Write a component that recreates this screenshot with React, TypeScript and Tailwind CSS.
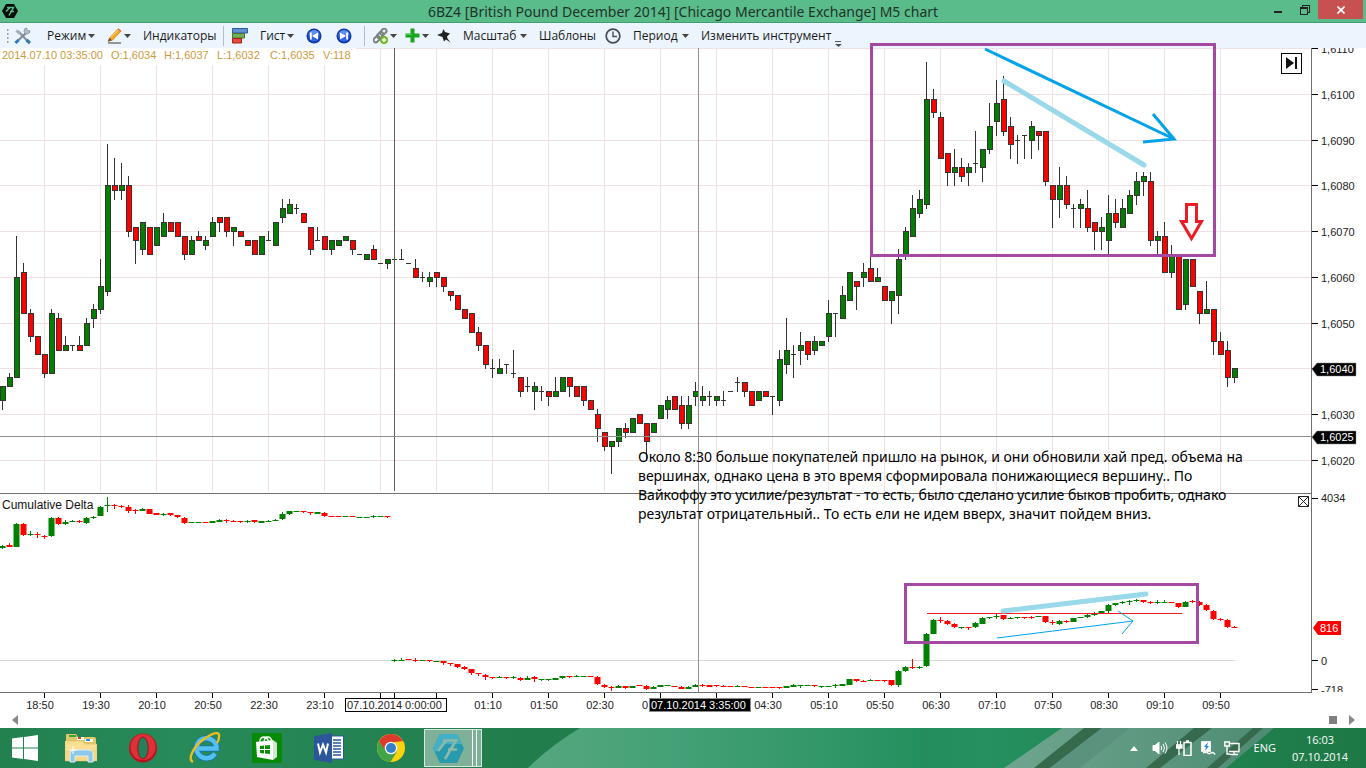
import React from "react";

type Candle = [number, string, number, number, number, number];

// direction (g up, r down, d doji), high, body top, body bottom, low; in ticks above 1.6000
const PRICE = `g36,36,33,31 g39,38,36,36 g69,60,38,38 r63,61,52,52 r53,52,47,46 r47,47,43,43 r43,43,39,38 g53,52,39,39 r52,51,44,44 g47,45,44,44
d45,45,45,44 r47,45,44,44 g51,50,45,45 g54,53,51,49 g64,58,53,52 g89,80,57,56 r86,80,79,77 g85,80,79,77 r82,80,70,69 r71,71,68,63
g72,72,66,65 r71,71,65,65 g71,71,67,67 g74,72,69,69 r72,72,70,70 r72,72,69,69 r69,69,65,64 g69,68,65,65 r70,69,68,68 g69,68,67,66
g73,72,69,69 r73,73,72,70 r73,73,70,69 g71,71,70,67 r70,70,69,69 r68,68,67,67 r68,68,65,65 g69,69,65,65 d70,68,68,68 g72,72,67,67
g77,75,73,72 g77,76,74,74 d76,75,75,74 r74,74,72,72 r71,71,66,65 d71,68,68,68 r69,69,66,66 g68,68,66,65 g68,68,67,67 g69,69,68,68
r68,68,66,65 d65,65,65,65 g65,65,64,64 r67,66,64,64 d63,63,63,63 g64,64,63,62 d65,64,64,62 d66,64,64,64 d63,63,63,63 r64,62,60,60
d61,60,60,59 g61,60,59,58 r61,61,60,58 r60,60,58,57 r57,57,56,55 r56,56,53,53 r53,53,51,51 r52,52,48,48 r49,48,45,44 r45,45,41,40
d42,40,40,38 g42,40,39,39 d41,41,41,39 d44,39,39,38 r38,38,35,34 d38,36,36,35 g37,36,35,31 d36,35,35,33 r35,35,34,32 g38,35,34,34
g38,38,35,35 r38,38,36,34 r36,36,34,34 r36,36,33,32 r33,33,31,31 r31,30,27,24 r26,26,23,22 g24,24,23,17 g27,27,24,23 r28,27,26,25
g29,29,26,26 r30,30,28,28 r28,28,24,20 g28,28,26,26 g32,32,29,29 g34,33,31,29 r34,34,31,31 r34,32,28,27 g34,32,28,27 g37,35,34,32
g36,34,33,32 d35,34,34,32 g34,34,33,32 d35,33,33,32 d35,35,35,35 d38,37,37,35 r37,37,35,34 r35,35,32,32 g35,35,33,33 r35,35,34,34
d34,34,34,30 g44,42,33,32 g51,44,41,39 d45,43,43,38 g48,45,44,41 r46,46,43,42 g47,46,44,43 g46,46,45,45 g55,52,47,46 d52,52,52,47
g58,56,51,51 g61,61,55,55 r59,59,58,53 g63,61,60,58 r65,62,59,59 g62,60,59,59 r58,58,55,55 g57,57,55,50 g66,64,56,52 g71,70,65,64
g78,75,69,69 g79,77,74,73 g107,99,76,75 r101,99,96,95 r96,95,86,86 r87,87,83,80 g88,84,83,80 r86,84,82,81 g85,84,83,80 d92,85,85,83
g88,88,84,81 g98,93,88,87 g103,98,94,91 r104,99,92,91 r95,93,89,86 d91,90,90,85 d91,91,91,86 g94,93,90,86 r92,92,91,88 r92,92,81,80
r80,80,77,71 g84,80,77,73 r82,80,76,75 d76,75,75,71 g77,76,75,71 r79,75,71,70 r72,72,70,66 g73,71,70,66 g78,74,68,65 r77,74,72,71
g77,75,71,71 g79,78,74,74 g83,81,78,76 g83,82,81,78 r83,81,68,67 g70,69,68,65 r72,69,61,61 g67,65,61,60 r65,65,53,53 g64,64,54,53
r64,64,58,58 r57,57,52,50 g59,53,52,52 r53,53,46,43 r48,46,43,43 r46,44,38,36 g40,40,38,37`;

// direction, high, body top, body bottom, low; in chart coordinates
const DELTA = `g545,546,548,549 r543,545,547,547 g523,524,547,547 r523,524,535,536 g531,534,535,536 r532,534,535,538 r535,536,537,539 g517,518,536,537 r517,518,524,525 g520,522,524,525
g520,521,522,522 r520,521,522,523 g517,518,523,524 g516,517,518,519 g506,507,516,516 g497,505,506,512 r504,505,506,509 r505,506,507,508 r505,507,511,513 r509,510,511,514
g508,509,511,511 r509,509,514,514 r513,513,515,515 g513,514,515,516 r513,513,515,516 r515,515,517,518 r517,518,523,524 g522,522,523,523 g522,522,523,523 r522,522,523,523
g521,521,523,523 g519,520,522,522 r519,520,521,523 r520,521,522,522 r521,521,522,523 g520,521,522,523 r520,520,522,523 g521,521,523,523 g520,521,522,522 g519,520,521,521
g512,514,519,520 g511,511,514,515 g511,511,512,512 r511,511,512,513 r512,512,513,515 g512,512,514,514 r512,513,516,517 r516,516,517,517 r516,516,517,517 g516,516,517,517
r516,516,517,517 g517,517,518,518 g517,517,518,518 g515,516,517,518 g516,516,517,517 r516,516,517,518 g659,660,661,662 g658,660,661,661 r659,659,660,660 r658,660,661,662
g660,660,661,661 r660,660,661,662 g661,661,662,662 r661,661,663,665 r663,663,664,666 r664,664,667,668 r666,667,669,670 r669,669,673,675 r673,673,674,676 r674,675,677,680
r677,677,678,679 g676,677,678,678 r677,677,678,679 g676,677,678,679 r677,678,680,681 g676,678,680,680 r676,677,679,682 g679,679,680,681 g679,679,680,681 g678,678,680,680
g676,676,678,679 r676,676,677,678 g675,676,677,677 g676,676,677,677 r676,676,677,677 r676,677,684,685 r684,685,687,688 r686,687,688,691 g685,686,688,688 r686,686,688,689
g686,686,688,688 r685,685,686,686 r685,686,689,690 g686,687,689,689 g685,685,687,687 g685,685,686,686 r686,686,687,687 r686,687,689,689 g686,687,689,689 g684,685,687,687
r684,685,686,687 r685,685,687,687 r685,685,686,687 r685,686,687,687 r686,686,687,687 g685,686,687,687 r686,686,687,687 r687,687,688,688 g687,687,688,688 r687,687,688,688
r687,687,688,688 r687,687,688,689 g686,686,688,688 g684,685,687,687 g685,685,686,688 g685,685,686,686 r685,685,686,687 g686,686,687,688 g686,686,687,687 g684,685,686,688
g684,684,686,686 g679,679,685,685 r679,679,681,682 r680,681,682,682 g679,680,681,681 r680,680,681,681 r680,680,681,682 r680,680,685,686 g670,671,685,687 g666,667,671,672
r659,667,668,669 g666,667,668,669 g633,634,666,667 g619,620,634,634 r617,620,621,623 r620,621,624,625 r623,624,627,628 g627,627,628,629 r627,627,628,630 g622,623,627,628
g617,618,624,624 g617,617,618,619 g614,616,617,619 r615,615,619,620 g617,618,619,619 g617,617,618,619 r617,617,618,619 r616,617,618,619 g616,616,617,617 r616,616,622,623
r620,622,623,625 g620,621,624,625 r620,621,622,623 g618,618,622,622 g617,617,618,618 g614,615,617,618 g612,613,615,616 g611,611,613,613 g604,605,611,614 g603,603,605,606
g601,602,603,604 g600,601,602,605 g599,600,601,602 r600,600,602,603 r601,602,603,604 g600,602,603,604 g600,602,603,603 r602,602,603,603 r603,603,607,608 g601,602,607,607
r600,601,602,603 r601,602,605,606 r604,605,610,611 r610,611,619,620 r618,619,620,621 r619,620,627,628 r626,627,628,628`;

function parse(data: string): Candle[] {
  return data
    .trim()
    .split(/\s+/)
    .map((t, i) => {
      const [h, top, bottom, l] = t.slice(1).split(",").map(Number);
      return [2 + 7 * i, t[0], h, top, bottom, l];
    });
}

const priceY = (t: number) => Math.round(94 + (100 - t) * 4.57);
const priceCandles = parse(PRICE);
const deltaCandles = parse(DELTA);
const columns = Array.from({ length: 22 }, (_, k) => 44 + 56 * k);
const priceLabels = [110, 100, 90, 80, 70, 60, 50, 40, 30, 20];
const timeLabels: [number, string][] = [
  "18:50", "19:30", "20:10", "20:50", "22:30", "23:10", "", "", "01:10", "01:50", "02:30",
  "", "", "04:30", "05:10", "05:50", "06:30", "07:10", "07:50", "08:30", "09:10", "09:50",
].map((t, k) => [40 + 56 * k, t]);

const note = [
  "Около 8:30 больше покупателей пришло на рынок, и они обновили хай пред. объема на",
  "вершинах, однако цена в это время сформировала понижающиеся вершину.. По",
  "Вайкоффу это усилие/результат - то есть, было сделано усилие быков пробить, однако",
  "результат отрицательный.. То есть ели не идем вверх, значит пойдем вниз.",
];

const axisFont = "font-['Liberation_Sans',sans-serif] text-[11px]";

function Chart() {
  return (
    <svg viewBox="0 48 1366 664" className="block h-auto w-full overflow-visible" role="img" aria-label="6BZ4 M5 chart">
      <rect x="0" y="48" width="1366" height="664" fill="#fff" />
      <g shapeRendering="crispEdges" fill="#f0e0e4">
        {columns.map((x) => (
          <rect key={x} x={x} y={x < 350 ? 65 : 48} width="1" height={x < 350 ? 426 : 443} />
        ))}
        {priceLabels.map((t) => (
          <rect key={t} x={t === 110 ? 356 : 0} y={priceY(t)} width={t === 110 ? 955 : 1311} height="1" />
        ))}
      </g>
      <g shapeRendering="crispEdges">
        {priceCandles.map(([x, d, h, top, bottom, l]) => {
          const y1 = priceY(top);
          const y2 = priceY(bottom);
          return (
            <g key={x}>
              <rect x={x} y={priceY(h)} width="1" height={priceY(l) - priceY(h) + 1} fill="#333" />
              {d === "d" ? (
                <rect x={x - 2} y={y1} width="5" height="1" fill="#333" />
              ) : (
                <>
                  <rect x={x - 2} y={y1} width="6" height={y2 - y1 + 1} fill="#3a3232" />
                  <rect x={x - 1} y={y1 + 1} width="4" height={y2 - y1 - 1} fill={d === "g" ? "#008000" : "#ff0000"} />
                </>
              )}
            </g>
          );
        })}
        <rect x="0" y="660" width="1235" height="1" fill="#d8d8d8" />
        {deltaCandles.map(([x, d, h, top, bottom, l]) => (
          <g key={x} fill={d === "g" ? "#008000" : "#ff0000"}>
            <rect x={x} y={h} width="1" height={l - h} />
            <rect x={x - 3} y={top} width="7" height={bottom - top} opacity="0.5" />
            <rect x={x - 2} y={top} width="5" height={bottom - top} />
          </g>
        ))}
        <rect x="394" y="48" width="1" height="443" fill="#606060" />
        <rect x="698" y="48" width="1" height="644" fill="#909090" />
        <rect x="0" y="436" width="1311" height="1" fill="#909090" />
        <rect x="0" y="493" width="1311" height="1" fill="#707070" />
        <rect x="1311" y="48" width="1" height="645" fill="#707070" />
        <rect x="0" y="692" width="1312" height="1" fill="#707070" />
        {[...columns, 394].map((x) => (
          <rect key={x} x={x} y="693" width="1" height="5" fill="#000" />
        ))}
        {[...priceLabels.map(priceY), 498, 660, 689].map((y) => (
          <rect key={y} x="1312" y={y} width="6" height="1" fill="#000" />
        ))}
      </g>

      <clipPath id="plot">
        <rect x="0" y="48" width="1366" height="644" />
      </clipPath>
      <g className={axisFont} clipPath="url(#plot)" fill="#222">
        {priceLabels
          .filter((t) => t !== 40)
          .map((t) => (
            <text key={t} x="1321" y={priceY(t) + 5}>
              {`1,6${String(t).padStart(3, "0")}`}
            </text>
          ))}
        <text x="1321" y="502">4034</text>
        <text x="1321" y="665">0</text>
        <text x="1321" y="694">-718</text>
      </g>
      <g className={axisFont} fill="#222" textAnchor="middle">
        {timeLabels.map(([x, t]) => (
          <text key={x} x={x} y="709">{t}</text>
        ))}
        <text x="645" y="709">0</text>
      </g>
      <g className={axisFont} fill="#cc9a3c">
        <text x="2" y="59">2014.07.10 03:35:00</text>
        <text x="111" y="59">O:1,6034</text>
        <text x="164" y="59">H:1,6037</text>
        <text x="217" y="59">L:1,6032</text>
        <text x="270" y="59">C:1,6035</text>
        <text x="323" y="59">V:118</text>
      </g>
      <text x="2" y="509" className="font-['Liberation_Sans',sans-serif] text-[12px]" fill="#111">Cumulative Delta</text>

      <g className={axisFont}>
        <path d="M1312 369l5-6h39v13h-39z" fill="#000" stroke="#888" strokeWidth="0.5" />
        <text x="1320" y="373" fill="#fff">1,6040</text>
        <path d="M1312 437l5-6h39v13h-39z" fill="#000" stroke="#888" strokeWidth="0.5" />
        <text x="1320" y="441" fill="#fff">1,6025</text>
        <path d="M1313 628l5-7h23v14h-23z" fill="#f00" />
        <text x="1320" y="632" fill="#fff">816</text>
        <rect x="345.5" y="698.5" width="101" height="13" fill="#fff" stroke="#000" />
        <text x="347" y="709" fill="#222">07.10.2014 0:00:00</text>
        <rect x="649.5" y="698.5" width="101" height="13" fill="#000" stroke="#888" />
        <text x="651" y="709" fill="#fff">07.10.2014 3:35:00</text>
      </g>

      <rect x="1281.5" y="53.5" width="20" height="20" fill="#fff" stroke="#000" />
      <path d="M1286 57v12l8-6zM1295 57h2v12h-2z" fill="#111" />
      <path d="M1298.500 496.500h10v10h-10zM1298.500 496.500l10 10M1308.500 496.500l-10 10" fill="#fff" stroke="#222" />

      <g fill="none">
        <g stroke="#a349a4" strokeWidth="3">
          <rect x="871.5" y="44.5" width="343" height="211" />
          <rect x="905.5" y="584.5" width="292" height="58" />
        </g>
        <path d="M927 613.5H1182" stroke="#ed1c24" strokeWidth="1" />
        <g stroke="#99d9ea" strokeWidth="5" strokeLinecap="round">
          <path d="M1004 81L1144 165" />
          <path d="M1003 611L1146 594" />
        </g>
        <path d="M985 49L1174 139M1153 114L1174 139L1143 142" stroke="#00a2e8" strokeWidth="3" />
        <path d="M997 638L1133 621M1118 611L1133 621L1122 634" stroke="#00a2e8" strokeWidth="1" />
        <path d="M1186.500 204.500h10v17h5l-10 17-10-17h5z" stroke="#ed1c24" strokeWidth="3" />
      </g>
      <g className="font-['Noto_Sans',sans-serif] text-[14px]" fill="#000">
        {note.map((line, i) => (
          <text key={line} x="638" y={462 + 19 * i}>{line}</text>
        ))}
      </g>
    </svg>
  );
}

const Caret = () => (
  <svg viewBox="0 0 7 4" className="h-1 w-[7px] shrink-0" aria-hidden="true">
    <path d="M0 0h7L3.500 4z" fill="#444" />
  </svg>
);

function Tool({ w, label, caret, children }: { w: string; label?: string; caret?: boolean; children: React.ReactNode }) {
  return (
    <button type="button" aria-label={label} className={`flex h-6 shrink-0 items-center justify-between whitespace-nowrap ${w}`}>
      {children}
      {caret && <Caret />}
    </button>
  );
}

const Separator = () => <span className="-mr-1 h-5 w-px shrink-0 bg-[#b4bcc6]" />;

function Seek({ flip }: { flip?: boolean }) {
  return (
    <svg viewBox="0 0 16 16" className={flip ? "size-4 -scale-x-100" : "size-4"} aria-hidden="true">
      <circle cx="8" cy="8" r="7.500" fill="#1238a8" />
      <circle cx="8" cy="8" r="5.800" fill="#2f66dc" />
      <path d="M2.500 7a5.500 5 0 0 1 11 0q-5.500 2-11 0z" fill="#7fa8f4" opacity=".6" />
      <path d="M4 4.500h1.800v7H4zM12 4.500v7L6 8z" fill="#fff" />
    </svg>
  );
}

function Toolbar() {
  return (
    <div role="toolbar" aria-label="Инструменты" className="flex h-[25px] items-center gap-3 overflow-hidden bg-[#ecf4fd] pl-[15px] font-['Open_Sans',sans-serif] text-[12px] text-[#1a1a1a]">
      <Tool w="relative w-5" label="Настройки">
        <svg viewBox="0 0 28 18" className="absolute -left-[9px] h-[18px] w-7" aria-hidden="true">
          <path d="M1 3h1.500M1 7h1.500M1 11h1.500M1 15h1.500" stroke="#888" strokeWidth="1.500" />
          <path d="M12 4l9.500 10" stroke="#8494a4" strokeWidth="2.200" />
          <path d="M9.500 4.500L11 2.500l3.500 3-2 2z" fill="#a4b0bc" />
          <path d="M20.500 13l3.500 3" stroke="#3674b4" strokeWidth="3" />
          <path d="M20 6L12 13.500" stroke="#7b8b9a" strokeWidth="2.200" />
          <path d="M12.500 13L9.500 16" stroke="#2c78c4" strokeWidth="3" />
          <path d="M24 3.500a3 3 0 1 1-3-2.500v2l1 1z" fill="#b4bec8" stroke="#7b8b9a" strokeWidth=".7" />
        </svg>
      </Tool>
      <Tool w="w-12" caret>Режим</Tool>
      <Tool w="w-6" label="Рисование" caret>
        <svg viewBox="0 0 15 16" className="h-4 w-[15px]" aria-hidden="true">
          <path d="M11 .8l3 2.400-8.500 9L1 13.500l1.800-4z" fill="#f7a823" stroke="#c87812" strokeWidth=".6" />
          <path d="M4 9l8-7.600" stroke="#ffe08a" strokeWidth="1" />
          <path d="M1 13.500l1.500-3.500 2.500 2.200z" fill="#555" />
          <path d="M10.500 1.500l1-1 3 2.300-1 1z" fill="#e86a50" />
          <path d="M1 15h13" stroke="#777" strokeWidth="1.500" />
        </svg>
      </Tool>
      <Tool w="w-[68px]">Индикаторы</Tool>
      <Separator />
      <Tool w="w-4" label="Гистограмма">
        <svg viewBox="0 0 16 16" className="size-4" aria-hidden="true">
          <path d="M.5.5h15v4.500H.5z" fill="#6491d6" stroke="#2d5ba6" />
          <path d="M.5 5.500h12V10H.5z" fill="#78ad58" stroke="#3c7a28" />
          <path d="M.5 10.500h9V15H.5z" fill="#e54c3c" stroke="#a02218" />
        </svg>
      </Tool>
      <Tool w="w-[34px]" caret>Гист</Tool>
      <Tool w="w-4" label="Назад"><Seek /></Tool>
      <Tool w="ml-0.5 w-4" label="Вперёд"><Seek flip /></Tool>
      <Separator />
      <Tool w="w-[24px]" label="Связь" caret>
        <svg viewBox="0 0 15 16" className="h-4 w-[15px]" aria-hidden="true">
          <g fill="none" stroke="#7c8480" strokeWidth="2">
            <rect x="7" y="1.500" width="7" height="4.500" rx="2.200" transform="rotate(-45 10.500 4)" />
            <rect x="3.500" y="5" width="7" height="4.500" rx="2.200" transform="rotate(-45 7 7)" />
            <rect x="0" y="9" width="7" height="4.500" rx="2.200" transform="rotate(-45 3.500 11)" />
          </g>
          <circle cx="11" cy="12" r="3.700" fill="#77c424" stroke="#4f9a10" strokeWidth=".6" />
          <path d="M11 10v4M9 12h4" stroke="#fff" strokeWidth="1.400" />
        </svg>
      </Tool>
      <Tool w="-ml-1 w-[24px]" label="Добавить" caret>
        <svg viewBox="0 0 15 15" className="size-[15px]" aria-hidden="true">
          <path d="M5.500.5h4v5h5v4h-5v5h-4v-5h-5v-4h5z" fill="#18a51c" />
          <path d="M6 1h1v5H1v1h6V1z" fill="#4ccb50" />
        </svg>
      </Tool>
      <Tool w="-ml-1 w-[14px]" label="Закрепить">
        <svg viewBox="0 0 14 14" className="size-[14px]" aria-hidden="true">
          <path d="M6.500 0l1.500 3 5 1.500-3 3 .5 2 3 4-4.500-3L7 12.500 5.500 8 0 6l5-2z" fill="#222" />
        </svg>
      </Tool>
      <Tool w="w-[64px]" caret>Масштаб</Tool>
      <Tool w="w-[54px]">Шаблоны</Tool>
      <Tool w="w-4" label="Время">
        <svg viewBox="0 0 16 16" className="size-4" fill="none" stroke="#484c50" aria-hidden="true">
          <circle cx="8" cy="8" r="6.800" strokeWidth="1.700" />
          <path d="M8 3.500V8.500h4" strokeWidth="1.400" />
        </svg>
      </Tool>
      <Tool w="w-[56px]" caret>Период</Tool>
      <Tool w="w-[122px]">Изменить инструмент</Tool>
      <Tool w="w-2" label="Ещё">
        <svg viewBox="0 0 7 6" className="mt-4 h-[6px] w-[7px]" aria-hidden="true">
          <path d="M0 0h6v1H0zM0 3h7L3.500 6z" fill="#555" />
        </svg>
      </Tool>
    </div>
  );
}

function TitleBar() {
  return (
    <header className="relative flex h-[23px] items-start justify-end border-b border-[#3f9f70] bg-[#5abc8b]">
      <svg viewBox="0 0 16 16" className="absolute top-[3px] left-[2px] size-4" aria-hidden="true">
        <path d="M4 1h8l4 7-4 7H4L0 8z" fill="#050d0a" />
        <path d="M5 4.500h6.500L7 12.500M4 8.500L7.500 5M8 8.500h4" fill="none" stroke="#5abc8b" strokeWidth="1.500" />
      </svg>
      <h1 className="absolute inset-x-0 top-0 text-center font-['Noto_Sans',sans-serif] text-[14px] leading-[23px] text-[#1f3329]">
        6BZ4 [British Pound December 2014] [Chicago Mercantile Exchange] M5 chart
      </h1>
      <button type="button" aria-label="Свернуть" className="relative flex h-5 w-[27px] items-center justify-center">
        <span className="mt-1 h-[2px] w-2 bg-[#222]" />
      </button>
      <button type="button" aria-label="Развернуть" className="relative flex h-5 w-[27px] items-center justify-center">
        <svg viewBox="0 0 10 10" className="size-[10px]" fill="none" stroke="#222" shapeRendering="crispEdges" aria-hidden="true">
          <path d="M.5 2.500h7v7h-7zM0 3.500h8M2.500 2V.5h7v7H8" />
        </svg>
      </button>
      <button type="button" aria-label="Закрыть" className="relative mr-[3px] flex h-[19px] w-[45px] items-center justify-center bg-[#c75050]">
        <svg viewBox="0 0 8 8" className="size-2" stroke="#fff" strokeWidth="1.700" aria-hidden="true">
          <path d="M.5.5l7 7M7.500.5l-7 7" />
        </svg>
      </button>
    </header>
  );
}

function TaskButton({ label, w, children }: { label: string; w: string; children: React.ReactNode }) {
  return (
    <button type="button" aria-label={label} className={`relative flex h-10 shrink-0 items-center justify-center ${w}`}>
      {children}
    </button>
  );
}

function Taskbar() {
  return (
    <footer className="relative flex h-10 items-center overflow-hidden bg-[#24845a]">
      <svg viewBox="0 0 1366 40" preserveAspectRatio="none" className="absolute inset-0 h-full w-full" aria-hidden="true">
        <defs>
          <linearGradient id="base">
            <stop offset="0" stopColor="#23804f" />
            <stop offset=".13" stopColor="#278a5a" />
            <stop offset=".4" stopColor="#227c4c" />
            <stop offset=".72" stopColor="#259060" />
            <stop offset="1" stopColor="#1d7845" />
          </linearGradient>
          <linearGradient id="glow">
            <stop offset="0" stopColor="#55a77f" />
            <stop offset=".4" stopColor="#43a076" />
            <stop offset="1" stopColor="#25905f" />
          </linearGradient>
          <linearGradient id="streak">
            <stop offset="0" stopColor="#6fa58e" />
            <stop offset="1" stopColor="#4e8b73" />
          </linearGradient>
        </defs>
        <rect width="1366" height="40" fill="url(#base)" />
        <path d="M528 40Q550 18 580 0H920V40z" fill="url(#glow)" />
        <path d="M1004 40L1062 0H1274L1226 40z" fill="url(#streak)" />
        <path d="M1034 40L1084 0h18L1050 40zM1146 40L1194 0h18L1160 40zM1207 40L1253 0h10L1218 40z" fill="#37694c" />
        <path d="M1050 40L1102 0h28L1080 40z" fill="#5a927e" />
      </svg>

      <TaskButton label="Пуск" w="w-[50px]">
        <svg viewBox="0 0 26 26" className="size-[26px]" fill="#fff" aria-hidden="true">
          <path d="M0 3.500l11-1.500v10.500H0zM12 1.900L26 0v12.500H12zM0 13.500h11V24L0 22.500zM12 13.500h14V26l-14-1.900z" />
        </svg>
      </TaskButton>
      <TaskButton label="Проводник" w="w-[62px]">
        <svg viewBox="0 0 32 30" className="h-[30px] w-8" aria-hidden="true">
          <path d="M1 2q0-1 1-1h9l2 3h16q2 0 2 2v21H1z" fill="#e4c567" />
          <path d="M4 2h7v2H4z" fill="#31a83b" />
          <path d="M12 4h7v3h-7z" fill="#fff" /><path d="M13 4h3v2h-3z" fill="#d64434" />
          <path d="M20 6h8v3h-8z" fill="#fff" /><path d="M21 6h4v2h-4z" fill="#3094dc" />
          <path d="M0 8h18l2 3h12v17H0z" fill="#f8df93" stroke="#d6b659" strokeWidth=".5" />
          <path d="M1 17h30v10H1z" fill="#f2d27c" opacity=".7" />
          <path d="M5 29v-8q0-4 4-4h14q5 0 5 4v8h-5v-6H10v6z" fill="#8dc8e8" stroke="#d9f1fc" />
          <path d="M8 13v8M4 17h8" stroke="#fff" />
        </svg>
      </TaskButton>
      <TaskButton label="Opera" w="w-[62px]">
        <svg viewBox="0 0 28 30" className="h-[30px] w-7" aria-hidden="true">
          <ellipse cx="14" cy="15" rx="14" ry="14.500" fill="#b8131f" />
          <ellipse cx="14" cy="14" rx="12.500" ry="13" fill="#df303a" />
          <ellipse cx="14" cy="15" rx="5.200" ry="11" fill="#23805a" stroke="#a30e19" />
        </svg>
      </TaskButton>
      <TaskButton label="Internet Explorer" w="w-[62px]">
        <svg viewBox="0 0 32 32" className="size-8" fill="none" aria-hidden="true">
          <path d="M26 21.500a10 10 0 1 1 1.500-5H9" stroke="#1673bd" strokeWidth="6" />
          <path d="M26 21.500a10 10 0 1 1 1.500-5H9" stroke="#54c0ef" strokeWidth="4.500" />
          <path d="M4 30C-2 27 5 14 15 7S31-1 30 5q0 3-2 6" stroke="#edbc1d" strokeWidth="2.400" />
        </svg>
      </TaskButton>
      <TaskButton label="Магазин" w="w-[62px]">
        <svg viewBox="0 0 30 30" className="size-[30px]" aria-hidden="true">
          <path d="M0 0h30v30H0z" fill="#078b07" />
          <path d="M4 9l17-2v20L5 24z" fill="#fff" /><path d="M21 7l4 3v14l-4 3z" fill="#cfe8cf" />
          <path d="M8 10V7q1-3 4-3t4 3v3M12 8q1-4 4-4t4 5" fill="none" stroke="#fff" strokeWidth="1.300" />
          <path d="M8 13l4-.4V16H8zM13 12.500l5-.5v4h-5zM8 17h4v3.500L8 20zM13 17h5v4l-5-.5z" fill="#078b07" />
        </svg>
      </TaskButton>
      <TaskButton label="Word" w="w-[62px]">
        <svg viewBox="0 0 30 30" className="size-[30px]" aria-hidden="true">
          <path d="M16 3h13.500v23H16z" fill="#fff" stroke="#2b579a" />
          <path d="M19 7h8M19 10h8M19 13h8M19 16h8M19 19h8M19 22h8" stroke="#2b579a" strokeWidth="1.300" />
          <path d="M0 3l18-3v30L0 27z" fill="#2b579a" />
          <path d="M4 10.500l2 9 3-8 3 8 2-9" fill="none" stroke="#fff" strokeWidth="2" />
        </svg>
      </TaskButton>
      <TaskButton label="Chrome" w="w-[62px]">
        <svg viewBox="0 0 28 28" className="size-7" aria-hidden="true">
          <circle cx="14" cy="14" r="14" fill="#fcd20b" />
          <path d="M1.900 7A14 14 0 0 1 26.100 7L14 8.500 8 17z" fill="#dc3a2c" />
          <path d="M1.900 7A14 14 0 0 0 13.500 28L20 17.500 8.500 17z" fill="#41a548" />
          <circle cx="14" cy="14" r="6.300" fill="#f5f5f5" />
          <circle cx="14" cy="14" r="5" fill="#347fcc" />
        </svg>
      </TaskButton>
      <TaskButton label="6BZ4" w="ml-[2px] w-[58px]">
        <span className="flex h-[38px] w-full border border-[#d8eadf] bg-[#7fb198]">
          <span className="flex flex-1 items-center justify-center border-r border-white">
            <svg viewBox="0 0 31 29" className="h-[29px] w-[31px]" aria-hidden="true">
              <path d="M7 0h17l7 14.500L24 29H7L0 14.500z" fill="#269aae" />
              <path d="M7 0h17l5 10H11L2 18.500 0 14.500z" fill="#43b0c8" />
              <path d="M10 6.500h13L12 25M13 7L5 17M15 15.500h9" fill="none" stroke="#8fb9a5" strokeWidth="2.600" />
            </svg>
          </span>
          <span className="w-1 border-r border-white" />
          <span className="w-1" />
        </span>
      </TaskButton>

      <div className="relative ml-auto flex items-center gap-2 pr-4 font-['Open_Sans',sans-serif] text-[11px] text-white">
        <button type="button" aria-label="Скрытые значки" className="mr-1 flex w-3 justify-center">
          <svg viewBox="0 0 8 5" className="h-[5px] w-2" aria-hidden="true"><path d="M4 0l4 5H0z" fill="#fff" /></svg>
        </button>
        <svg viewBox="0 0 16 16" className="size-4" fill="none" stroke="#fff" role="img" aria-label="Громкость">
          <path d="M1 5.500h2L7 2v12l-4-3.500H1z" fill="#fff" />
          <path d="M9 6q1.500 2 0 4M11 4q3 4 0 8M13 2.500q4 5.500 0 11" />
        </svg>
        <svg viewBox="0 0 16 16" className="size-4" fill="none" stroke="#fff" role="img" aria-label="Питание">
          <path d="M8 2.500h7v13H8zM10 1h3" strokeWidth="1.500" />
          <path d="M0 5h6v3H0zM3 8v7M1.500 1v4M4.500 1v4" fill="#fff" strokeWidth="1.300" />
        </svg>
        <svg viewBox="0 0 16 16" className="size-4" fill="none" role="img" aria-label="Подключение">
          <path d="M1.500 1.500h9v10h-9z" fill="#fff" stroke="#eee" />
          <path d="M8 2L4 7h2l-1 4 4-5H7z" fill="#1c88d4" />
          <path d="M3 12.500h4q2 2 4 .5t4 1.500" stroke="#fff" strokeWidth="1.500" />
        </svg>
        <svg viewBox="0 0 16 16" className="size-4" fill="none" stroke="#fff" role="img" aria-label="Сеть">
          <path d="M5 3.500h10v8H5M10 11.500V14M6 14.500h8" strokeWidth="1.400" />
          <path d="M.8 2h4.500v4H.8zM3 6v8h3" strokeWidth="1.400" />
        </svg>
        <span className="ml-1.5">ENG</span>
        <time className="ml-1.5 w-[60px] text-center leading-[17px]">
          16:03
          <br />
          07.10.2014
        </time>
      </div>
    </footer>
  );
}

export default function App() {
  return (
    <div className="flex min-h-screen flex-col overflow-x-hidden bg-white">
      <TitleBar />
      <Toolbar />
      <main className="relative">
        <Chart />
      </main>
      <div className="flex h-4 flex-1 items-center bg-white pr-[11px] pl-3">
        <button type="button" aria-label="Прокрутить влево">
          <svg viewBox="0 0 6 10" className="h-[10px] w-[6px]"><path d="M6 0v10L0 5z" fill="#888" /></svg>
        </button>
        <span className="mr-3 ml-auto size-2 bg-[#808080]" />
        <button type="button" aria-label="Прокрутить вправо">
          <svg viewBox="0 0 6 10" className="h-[10px] w-[6px]"><path d="M0 0v10l6-5z" fill="#888" /></svg>
        </button>
      </div>
      <Taskbar />
    </div>
  );
}
